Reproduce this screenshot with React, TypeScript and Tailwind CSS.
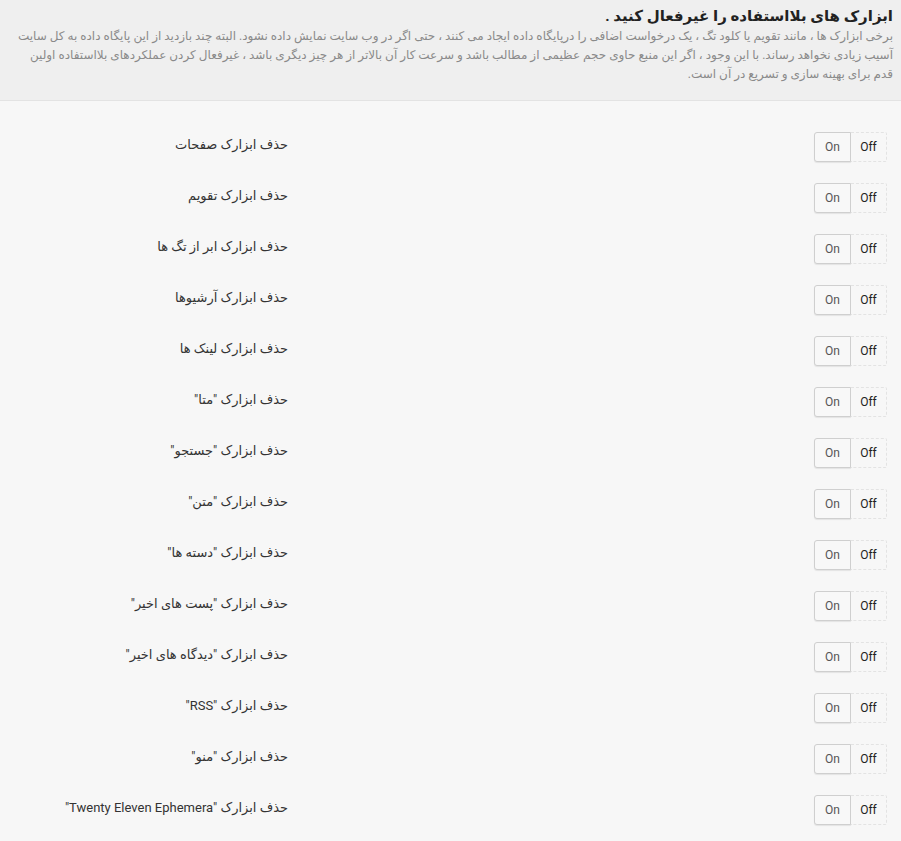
const WIDGETS = [
  "حذف ابزارک صفحات",
  "حذف ابزارک تقویم",
  "حذف ابزارک ابر از تگ ها",
  "حذف ابزارک آرشیوها",
  "حذف ابزارک لینک ها",
  'حذف ابزارک "متا"',
  'حذف ابزارک "جستجو"',
  'حذف ابزارک "متن"',
  'حذف ابزارک "دسته ها"',
  'حذف ابزارک "پست های اخیر"',
  'حذف ابزارک "دیدگاه های اخیر"',
  'حذف ابزارک "RSS"',
  'حذف ابزارک "منو"',
  'حذف ابزارک "Twenty Eleven Ephemera"',
]

function Toggle() {
  return (
    <div className="flex h-[30px] text-[12px]">
      <button
        type="button"
        className="w-[37px] h-full rounded-l-[3px] border border-[#cfcfcf] bg-[#f8f8f8] text-[#555] shadow-[0_1px_1px_rgba(0,0,0,0.08)]"
      >
        On
      </button>
      <button
        type="button"
        className="w-[36px] h-full rounded-r-[2px] border border-l-0 border-dashed border-[#e3e3e3] bg-[#f7f7f7] text-[#222]"
      >
        Off
      </button>
    </div>
  )
}

export default function App() {
  return (
    <div className="min-h-[841px] bg-[#f7f7f7] font-['Roboto','DejaVu_Sans',sans-serif]">
      {/* Header */}
      <div
        dir="rtl"
        className="h-[101px] bg-[#efefef] border-b border-[#e3e3e3] px-[8px] pt-[5px] text-right"
      >
        <h2 className="text-[15px] font-bold text-[#222] leading-[22px]">
          ابزارک های بلااستفاده را غیرفعال کنید .
        </h2>
        <p className="text-[12px] text-[#8a8a8a] leading-[19px]">
          برخی ابزارک ها ، مانند تقویم یا کلود تگ ، یک درخواست اضافی را درپایگاه داده ایجاد می کنند ، حتی اگر در وب سایت نمایش داده نشود. البته چند بازدید از این پایگاه داده به کل سایت آسیب زیادی نخواهد رساند. با این وجود ، اگر این منبع حاوی حجم عظیمی از مطالب باشد و سرعت کار آن بالاتر از هر چیز دیگری باشد ، غیرفعال کردن عملکردهای بلااستفاده اولین قدم برای بهینه سازی و تسریع در آن است.
        </p>
      </div>

      {/* Rows */}
      <div className="pt-[20px]">
        {WIDGETS.map((label) => (
          <div key={label} className="flex items-center justify-between h-[51px] pr-[14px]">
            <span dir="rtl" className="w-[288px] text-right text-[13px] text-[#333] -mt-[3px]">
              {label}
            </span>
            <Toggle />
          </div>
        ))}
      </div>
    </div>
  )
}
